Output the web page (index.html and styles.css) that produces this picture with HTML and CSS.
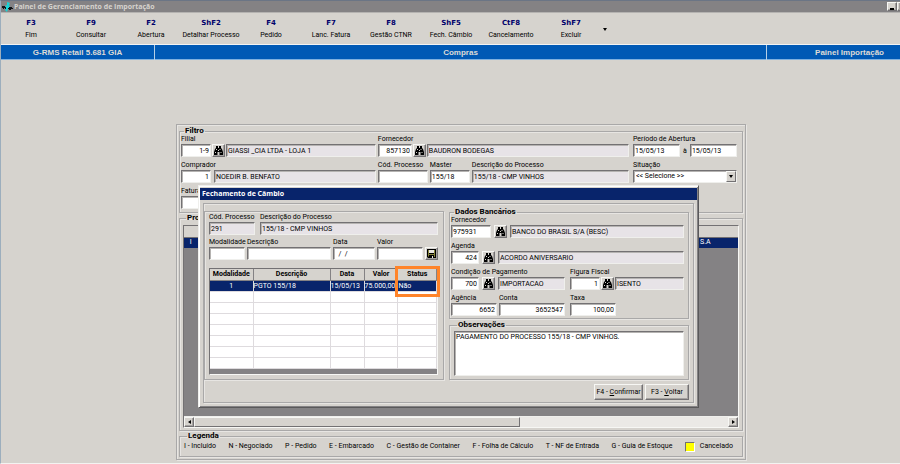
FILE: index.html
```html
<!DOCTYPE html>
<html lang="pt-BR">
<head>
<meta charset="utf-8">
<title>Painel de Gerenciamento de Importação</title>
<link rel="stylesheet" href="styles.css">
</head>
<body>
<svg class="defs" aria-hidden="true">
  <symbol id="binoculars" viewBox="0 0 11 11">
    <path fill="#000" d="M3 1h2v2h1V1h2v2l1 1 1 3v3H6.500V7h-2v3H1V7l1-3 1-1z"/>
    <path fill="#d6d3ce" d="M3 4h1v1H3zM2 7h1v1H2zM6.500 4h1v1h-1zM7.500 7h1v1h-1zM5 5h1v1H5z"/>
  </symbol>
</svg>

<header class="titlebar">
  <svg class="app-icon" viewBox="0 0 11 10" aria-hidden="true">
    <path fill="#18d3d6" d="M5 0l3 1-1 2 1 2-2 2-1 3-2-2 1-3-1-1 2-1z"/>
    <path fill="#101418" d="M0 4h3v1h1v2H3V6H2v1H1V6H0zM7 5h3v1h1v1H9v1H7V7H6V6h1z"/>
  </svg>
  <h1>Painel de Gerenciamento de Importação</h1>
  <button class="win-btn minimize" type="button" aria-label="Minimizar"></button>
  <button class="win-btn cut" type="button" aria-label="Restaurar"></button>
</header>

<nav class="toolbar">
  <button type="button"><b>F3</b>Fim</button>
  <button type="button"><b>F9</b>Consultar</button>
  <button type="button"><b>F2</b>Abertura</button>
  <button type="button"><b>ShF2</b>Detalhar Processo</button>
  <button type="button"><b>F4</b>Pedido</button>
  <button type="button"><b>F7</b>Lanc. Fatura</button>
  <button type="button"><b>F8</b>Gestão CTNR</button>
  <button type="button"><b>ShF5</b>Fech. Câmbio</button>
  <button type="button"><b>CtF8</b>Cancelamento</button>
  <button type="button"><b>ShF7</b>Excluir</button>
  <button class="more" type="button" aria-label="Mais"><span class="arrow-down"></span></button>
</nav>

<div class="banner">
  <span>G-RMS Retail 5.681 GIA</span>
  <span>Compras</span>
  <span class="module">Painel Importação</span>
</div>

<main class="workspace">
  <div class="panel">
    <fieldset class="filter">
      <legend>Filtro</legend>
      <div class="filter-grid">
        <div class="field">
          <label for="filial">Filial</label>
          <div class="controls">
            <input id="filial" class="w-30 num" value="1-9">
            <button class="find" type="button" aria-label="Buscar filial"><svg><use href="#binoculars"/></svg></button>
            <input class="grow" readonly aria-label="Nome da filial" value="GIASSI _CIA LTDA - LOJA 1">
          </div>
        </div>
        <div class="field">
          <label for="fornecedor">Fornecedor</label>
          <div class="controls">
            <input id="fornecedor" class="w-34 num" value="857130">
            <button class="find" type="button" aria-label="Buscar fornecedor"><svg><use href="#binoculars"/></svg></button>
            <input class="grow" readonly aria-label="Nome do fornecedor" value="BAUDRON BODEGAS">
          </div>
        </div>
        <div class="field side">
          <label for="de">Período de Abertura</label>
          <div class="controls">
            <input id="de" class="grow" value="15/05/13">
            <label for="ate" class="to">à</label>
            <input id="ate" class="grow" value="15/05/13">
          </div>
        </div>

        <div class="field">
          <label for="comprador">Comprador</label>
          <div class="controls wide">
            <input id="comprador" class="w-30 num" value="1">
            <input class="grow" readonly aria-label="Nome do comprador" value="NOEDIR B. BENFATO">
          </div>
        </div>
        <div class="fields">
          <div class="field w-50">
            <label for="cod">Cód. Processo</label>
            <input id="cod">
          </div>
          <div class="field w-40">
            <label for="master">Master</label>
            <input id="master" value="155/18">
          </div>
          <div class="field grow">
            <label for="desc">Descrição do Processo</label>
            <input id="desc" readonly value="155/18 - CMP VINHOS">
          </div>
        </div>
        <div class="field side">
          <label for="situacao">Situação</label>
          <div class="select">
            <select id="situacao"><option>&lt;&lt; Selecione &gt;&gt;</option></select>
            <span class="drop"><span class="arrow-down"></span></span>
          </div>
        </div>

        <div class="field w-50">
          <label for="fatura">Fatura</label>
          <input id="fatura">
        </div>
      </div>
    </fieldset>

    <fieldset class="processes">
      <legend>Processos</legend>
      <div class="grid">
        <table class="process-table">
          <colgroup><col class="c-mark"><col><col class="c-name"></colgroup>
          <thead><tr><th></th><th></th><th></th></tr></thead>
          <tbody><tr><td>I</td><td></td><td>S.A</td></tr></tbody>
        </table>
        <div class="scrollbar">
          <button type="button" aria-label="Rolar para a esquerda"><span class="arrow-left"></span></button>
          <div class="track"><div class="thumb"></div></div>
          <button type="button" aria-label="Rolar para a direita"><span class="arrow-right"></span></button>
        </div>
      </div>
    </fieldset>

    <fieldset class="key">
      <legend>Legenda</legend>
      <div class="key-row">
        <span>I - Incluído</span>
        <span>N - Negociado</span>
        <span>P - Pedido</span>
        <span>E - Embarcado</span>
        <span>C - Gestão de Container</span>
        <span>F - Folha de Cálculo</span>
        <span>T - NF de Entrada</span>
        <span>G - Guia de Estoque</span>
        <span class="cancelled"><i></i>Cancelado</span>
      </div>
    </fieldset>

    <section class="dialog" role="dialog" aria-labelledby="dialog-title">
      <h2 id="dialog-title">Fechamento de Câmbio</h2>
      <div class="dialog-body">
        <div class="columns">
          <div class="closing">
            <div class="fields wide">
              <div class="field w-46">
                <label for="d-cod">Cód. Processo</label>
                <input id="d-cod" readonly value="291">
              </div>
              <div class="field grow">
                <label for="d-desc">Descrição do Processo</label>
                <input id="d-desc" readonly value="155/18 - CMP VINHOS">
              </div>
            </div>
            <div class="fields">
              <div class="field w-36">
                <label for="modalidade">Modalidade</label>
                <input id="modalidade">
              </div>
              <div class="field grow">
                <label for="descricao">Descrição</label>
                <input id="descricao">
              </div>
              <div class="field w-42">
                <label for="data">Data</label>
                <input id="data" value="  /  /">
              </div>
              <div class="field w-46">
                <label for="valor">Valor</label>
                <input id="valor">
              </div>
              <button class="find" type="button" aria-label="Gravar">
                <svg viewBox="0 0 11 11">
                  <path fill="#000" d="M1 1h9v9H2L1 9z"/>
                  <path fill="#84823a" d="M2 2h1v4h5V2h1v7H8V7H3v2L2 8z"/>
                  <path fill="#e8e6e0" d="M3 2h5v3H3zM6 8h1v2H6z"/>
                </svg>
              </button>
            </div>
            <div class="payments">
              <table>
                <colgroup><col class="p-mod"><col class="p-desc"><col class="p-date"><col class="p-value"><col class="p-status"></colgroup>
                <thead><tr><th>Modalidade</th><th>Descrição</th><th>Data</th><th>Valor</th><th>Status</th></tr></thead>
                <tbody>
                  <tr class="selected"><td>1</td><td>PGTO 155/18</td><td>15/05/13</td><td>75.000,00</td><td>Não</td></tr>
                  <tr><td></td><td></td><td></td><td></td><td></td></tr>
                  <tr><td></td><td></td><td></td><td></td><td></td></tr>
                  <tr><td></td><td></td><td></td><td></td><td></td></tr>
                  <tr><td></td><td></td><td></td><td></td><td></td></tr>
                  <tr><td></td><td></td><td></td><td></td><td></td></tr>
                  <tr><td></td><td></td><td></td><td></td><td></td></tr>
                  <tr><td></td><td></td><td></td><td></td><td></td></tr>
                </tbody>
              </table>
              <div class="highlight"></div>
            </div>
          </div>

          <div class="details">
            <fieldset class="bank">
              <legend>Dados Bancários</legend>
              <div class="field">
                <label for="b-forn">Fornecedor</label>
                <div class="controls wide">
                  <input id="b-forn" class="w-40" value="975931">
                  <button class="find" type="button" aria-label="Buscar fornecedor"><svg><use href="#binoculars"/></svg></button>
                  <input class="grow" readonly aria-label="Nome do banco" value="BANCO DO BRASIL S/A (BESC)">
                </div>
              </div>
              <div class="field">
                <label for="agenda">Agenda</label>
                <div class="controls wide">
                  <input id="agenda" class="w-28 num" value="424">
                  <button class="find" type="button" aria-label="Buscar agenda"><svg><use href="#binoculars"/></svg></button>
                  <input class="grow" readonly aria-label="Nome da agenda" value="ACORDO ANIVERSARIO">
                </div>
              </div>
              <div class="pair">
                <div class="field">
                  <label for="condicao">Condição de Pagamento</label>
                  <div class="controls wide">
                    <input id="condicao" class="w-28 num" value="700">
                    <button class="find" type="button" aria-label="Buscar condição"><svg><use href="#binoculars"/></svg></button>
                    <input class="grow" readonly aria-label="Nome da condição" value="IMPORTACAO">
                  </div>
                </div>
                <div class="field">
                  <label for="figura">Figura Fiscal</label>
                  <div class="controls">
                    <input id="figura" class="w-30 num" value="1">
                    <button class="find" type="button" aria-label="Buscar figura"><svg><use href="#binoculars"/></svg></button>
                    <input class="grow" readonly aria-label="Nome da figura" value="ISENTO">
                  </div>
                </div>
                <div class="fields">
                  <div class="field w-46">
                    <label for="agencia">Agência</label>
                    <input id="agencia" class="num" value="6652">
                  </div>
                  <div class="field grow">
                    <label for="conta">Conta</label>
                    <input id="conta" class="num" value="3652547">
                  </div>
                </div>
                <div class="field w-46">
                  <label for="taxa">Taxa</label>
                  <input id="taxa" class="num" value="100,00">
                </div>
              </div>
            </fieldset>
            <fieldset class="notes">
              <legend>Observações</legend>
              <textarea aria-label="Observações">PAGAMENTO DO PROCESSO 155/18 - CMP VINHOS.</textarea>
            </fieldset>
          </div>
        </div>
        <div class="actions">
          <button type="button">F4 - <u>C</u>onfirmar</button>
          <button type="button">F3 - <u>V</u>oltar</button>
        </div>
      </div>
    </section>
  </div>
</main>
</body>
</html>
```
FILE: styles.css
```css
:root {
  --face: #d6d3ce;
  --light: #f7f7f4;
  --line: #a9a8a8;
  --dark: #737173;
  --gray: #848284;
  --navy: #08246b;
  --readonly: #e7e3e7;
}

* { box-sizing: border-box; }

body {
  margin: 0;
  min-height: 100vh;
  display: flex;
  flex-direction: column;
  background: var(--face);
  border-left: 1px solid #9caebd;
  border-top: 1px solid #6b7585;
  border-bottom: 1px solid #f3f3f1;
  font: 7px/9px Roboto, "Liberation Sans", Arial, sans-serif;
  color: #000;
}

.defs { position: absolute; width: 0; height: 0; }

button, input, select, textarea {
  font: inherit;
  color: inherit;
  margin: 0;
  border-radius: 0;
  outline: none;
}

button {
  display: flex;
  align-items: center;
  justify-content: center;
  padding: 0;
  background: var(--face);
  border: 1px solid;
  border-color: var(--light) var(--dark) var(--dark) var(--light);
  box-shadow: inset -1px -1px 0 #a5a2a0;
}

h1, h2 {
  margin: 0;
  font: bold 7px/12px "Open Sans", "Noto Sans", sans-serif;
}

/* Window frame */
.titlebar {
  display: flex;
  align-items: center;
  height: 12px;
  padding-left: 1px;
  background: var(--gray);
  color: var(--face);
  border-bottom: 1px solid #b5b3b1;
}
.app-icon { width: 11px; height: 10px; margin-right: 1px; }
.titlebar h1 { flex: 1; }
.win-btn { width: 10px; height: 9px; }
.win-btn.cut { width: 3px; border-right: 0; }
.minimize::after { content: ""; width: 4px; height: 2px; margin-top: 4px; background: #000; }

.toolbar { display: flex; height: 31px; padding-top: 2px; }
.toolbar button {
  flex: 0 0 60px;
  flex-direction: column;
  gap: 3px;
  border: 0;
  box-shadow: none;
  background: none;
  white-space: nowrap;
}
.toolbar b { font: bold 7px/9px "DejaVu Sans", sans-serif; color: #00006b; }
.toolbar .more { flex-basis: 7px; }

.arrow-down, .arrow-left, .arrow-right { width: 0; height: 0; border: 2px solid transparent; }
.arrow-down { border-top: 3px solid #000; border-bottom: 0; }
.arrow-left { border-right: 3px solid #000; border-left: 0; }
.arrow-right { border-left: 3px solid #000; border-right: 0; }

.banner {
  display: grid;
  grid-template-columns: 153px 1fr 134px;
  height: 16px;
  border-top: 1px solid #f3f3f3;
  border-bottom: 1px solid #7fb0df;
  background: #0059b5;
  color: #dedbd6;
  font: bold 8px/15px "Liberation Sans", Arial, sans-serif;
  text-align: center;
}
.banner span + span { border-left: 1px solid #b5cfe7; }
.banner .module { text-align: right; padding-right: 16px; }

/* Main panel */
.workspace {
  flex: 1;
  display: flex;
  padding: 64px 154px 3px 175px;
}
.panel {
  position: relative;
  flex: 1;
  min-width: 0;
  display: flex;
  flex-direction: column;
  gap: 1px;
  padding: 2px;
}
.panel, fieldset, .closing, .dialog-body {
  border: 1px solid var(--line);
  box-shadow: inset 1px 1px 0 #e7e5e2, 1px 1px 0 #e7e5e2;
}
fieldset { margin: 0; min-width: 0; padding: 0 4px 3px 1px; }
legend {
  margin-left: 3px;
  padding: 0 1px;
  font: bold 8px/8px Roboto, "Liberation Sans", Arial, sans-serif;
}

.field { display: flex; flex-direction: column; min-width: 0; }
.field label { line-height: 9px; white-space: nowrap; }
.controls { display: flex; gap: 1px; }
.wide { gap: 3px; }
.fields { display: flex; align-items: flex-end; gap: 2px; min-width: 0; }
.fields.wide { gap: 5px; }
.grow { flex: 1; min-width: 0; }
.w-28 { width: 28px; }
.w-30 { width: 30px; }
.w-34 { width: 34px; }
.w-36 { width: 36px; }
.w-40 { width: 40px; }
.w-42 { width: 42px; }
.w-46 { width: 46px; }
.w-50 { width: 50px; }

input, select, textarea {
  height: 13px;
  padding: 0 1px;
  background: #fff;
  border: 1px solid;
  border-color: var(--dark) #efefec #efefec var(--dark);
  box-shadow: inset 1px 1px 0 #b5b3b1;
}
.field > input { width: 100%; }
input:read-only { background: var(--readonly); }
.num { text-align: right; }
.find { flex: none; width: 13px; height: 13px; }
.find svg { width: 11px; height: 11px; }

.filter-grid {
  display: grid;
  grid-template-columns: 194fr 250fr 107px;
  gap: 4px 2px;
}
.side { padding: 0 1px 0 2px; }
.to { padding: 3px 2px 0; }
.select { position: relative; display: flex; }
.select select { flex: 1; appearance: none; padding-left: 2px; }
.drop {
  position: absolute;
  right: 1px;
  top: 1px;
  width: 10px;
  height: 11px;
  display: flex;
  align-items: center;
  justify-content: center;
  background: var(--face);
  border: 1px solid;
  border-color: var(--light) var(--dark) var(--dark) var(--light);
  pointer-events: none;
}

.processes { flex: 1; display: flex; flex-direction: column; padding: 3px 3px 2px; }
.grid {
  flex: 1;
  display: flex;
  flex-direction: column;
  justify-content: space-between;
  height: 100%;
  background: var(--gray);
  border: 1px solid;
  border-color: var(--dark) var(--light) var(--light) var(--dark);
}
table { width: 100%; table-layout: fixed; border-collapse: collapse; }
th, td { padding: 0; white-space: nowrap; overflow: hidden; }
.process-table th { height: 11px; background: var(--face); border-bottom: 1px solid var(--dark); }
.process-table td { height: 11px; background: var(--navy); color: #fff; }
.process-table td:first-child { text-align: center; border-right: 1px solid #c6c7ce; }
.c-mark { width: 14px; }
.c-name { width: 38px; }

.scrollbar { display: flex; height: 11px; background: #ebe9e6; border-top: 1px solid #efefec; }
.scrollbar button { width: 10px; }
.track { flex: 1; }
.thumb {
  width: 61%;
  height: 100%;
  background: var(--face);
  border: 1px solid;
  border-color: var(--light) var(--dark) var(--dark) var(--light);
}

.key { padding: 0 9px 3px 4px; }
.key-row { display: flex; justify-content: space-between; align-items: center; height: 13px; white-space: nowrap; }
.cancelled { display: flex; align-items: center; gap: 5px; }
.cancelled i { width: 10px; height: 10px; background: #ff0; border: 1px solid; border-color: var(--dark) #fff #fff var(--dark); }

/* Exchange closing dialog */
.dialog {
  position: absolute;
  left: 21px;
  right: 46px;
  top: 60px;
  padding: 2px 1px 4px;
  background: var(--face);
  border: 1px solid;
  border-color: #efefec #5a595a #5a595a #efefec;
  box-shadow: inset 1px 1px 0 #fff, inset -1px -1px 0 #848284;
}
.dialog h2 { padding-left: 2px; background: var(--navy); color: #fff; }
.dialog-body { margin: 3px 3px 0; padding: 4px 4px 2px 0; }
.columns { display: grid; grid-template-columns: 1fr 1fr; gap: 5px; }
.closing { display: flex; flex-direction: column; gap: 3px; margin-top: 3px; padding: 1px 5px 4px 4px; }
.details { display: flex; flex-direction: column; gap: 2px; }
.bank { padding-bottom: 2px; }
.bank > .field { margin-bottom: 4px; }
.pair { display: grid; grid-template-columns: 1fr 1fr; gap: 4px 5px; }
.notes { flex: 1; padding: 2px 4px 3px; }
textarea { display: block; width: 100%; height: 45px; padding: 1px; resize: none; overflow: hidden; }

.payments {
  position: relative;
  flex: 1;
  margin-top: 5px;
  background: var(--gray);
  border: 1px solid;
  border-color: var(--dark) var(--light) var(--light) var(--dark);
}
.payments table { background: #fff; border-bottom: 1px solid #313031; }
.payments th { height: 11px; line-height: 10px; background: var(--face); border-right: 1px solid var(--gray); border-bottom: 1px solid var(--gray); }
.payments td { height: 11px; line-height: 10px; border-right: 1px solid #dedbde; border-bottom: 1px solid #dedbde; }
.payments td:first-child { text-align: center; }
.payments .selected td { background: var(--navy); color: #fff; }
.p-mod { width: 19%; }
.p-desc { width: 34%; }
.p-date { width: 15%; }
.p-value { width: 15%; }
.p-status { width: 17%; }
.highlight {
  position: absolute;
  right: -3px;
  top: -3px;
  width: 20%;
  height: 31px;
  border: 3px solid #ff8429;
}

.actions { display: flex; justify-content: flex-end; gap: 2px; margin-top: 4px; }
.actions button { width: 49px; height: 16px; white-space: pre; }
.actions button + button { width: 44px; }
```
